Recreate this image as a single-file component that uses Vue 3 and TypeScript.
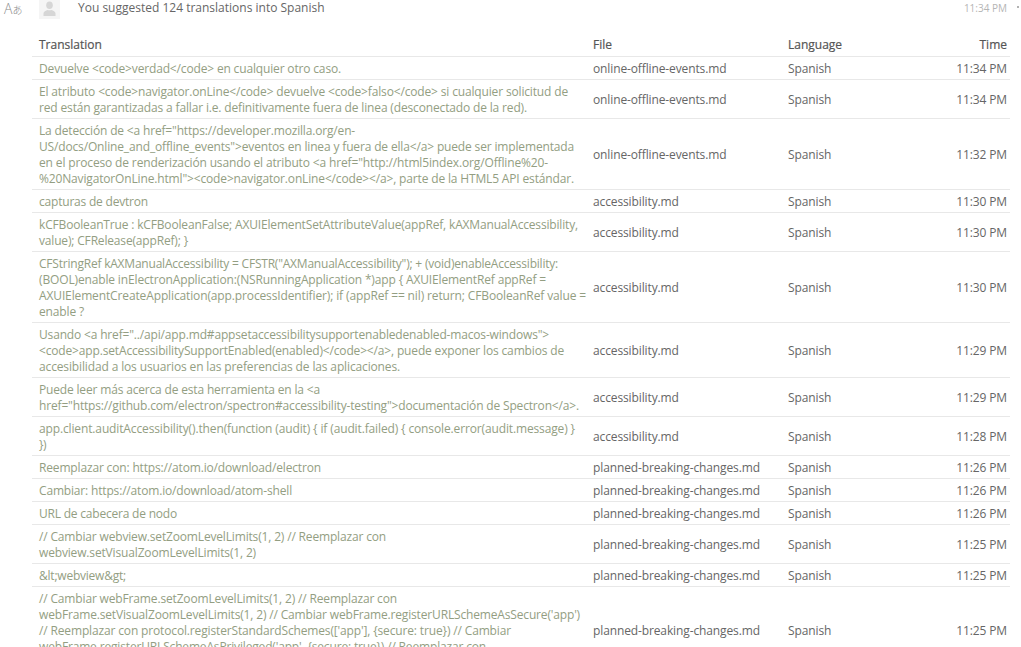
<script setup lang="ts">
import { onMounted, ref } from 'vue'

interface Line { s: string; end: number }
interface Row { t: Line[]; f: string; time: string }

const TEXT_LEFT = 39
const rows: Row[] = [
  { t: [{ s: 'Devuelve <code>verdad</code> en cualquier otro caso.', end: 341 }], f: 'online-offline-events.md', time: '11:34 PM' },
  { t: [{ s: 'El atributo <code>navigator.onLine</code> devuelve <code>falso</code> si cualquier solicitud de', end: 568 }, { s: 'red están garantizadas a fallar i.e. definitivamente fuera de linea (desconectado de la red).', end: 527 }], f: 'online-offline-events.md', time: '11:34 PM' },
  { t: [{ s: 'La detección de <a href="https://developer.mozilla.org/en-', end: 355 }, { s: 'US/docs/Online_and_offline_events">eventos en linea y fuera de ella</a> puede ser implementada', end: 574 }, { s: 'en el proceso de renderización usando el atributo <a href="http://html5index.org/Offline%20-', end: 548 }, { s: '%20NavigatorOnLine.html"><code>navigator.onLine</code></a>, parte de la HTML5 API estándar.', end: 574 }], f: 'online-offline-events.md', time: '11:32 PM' },
  { t: [{ s: 'capturas de devtron', end: 148 }], f: 'accessibility.md', time: '11:30 PM' },
  { t: [{ s: 'kCFBooleanTrue : kCFBooleanFalse; AXUIElementSetAttributeValue(appRef, kAXManualAccessibility,', end: 578 }, { s: 'value); CFRelease(appRef); }', end: 188 }], f: 'accessibility.md', time: '11:30 PM' },
  { t: [{ s: 'CFStringRef kAXManualAccessibility = CFSTR("AXManualAccessibility"); + (void)enableAccessibility:', end: 558 }, { s: '(BOOL)enable inElectronApplication:(NSRunningApplication *)app { AXUIElementRef appRef =', end: 546 }, { s: 'AXUIElementCreateApplication(app.processIdentifier); if (appRef == nil) return; CFBooleanRef value =', end: 586 }, { s: 'enable ?', end: 84 }], f: 'accessibility.md', time: '11:30 PM' },
  { t: [{ s: 'Usando <a href="../api/app.md#appsetaccessibilitysupportenabledenabled-macos-windows">', end: 549 }, { s: '<code>app.setAccessibilitySupportEnabled(enabled)</code></a>, puede exponer los cambios de', end: 564 }, { s: 'accesibilidad a los usuarios en las preferencias de las aplicaciones.', end: 400 }], f: 'accessibility.md', time: '11:29 PM' },
  { t: [{ s: 'Puede leer más acerca de esta herramienta en la <a', end: 320 }, { s: 'href="https://github.com/electron/spectron#accessibility-testing">documentación de Spectron</a>.', end: 579 }], f: 'accessibility.md', time: '11:29 PM' },
  { t: [{ s: 'app.client.auditAccessibility().then(function (audit) { if (audit.failed) { console.error(audit.message) }', end: 575 }, { s: '})', end: 46 }], f: 'accessibility.md', time: '11:28 PM' },
  { t: [{ s: 'Reemplazar con: https://atom.io/download/electron', end: 321 }], f: 'planned-breaking-changes.md', time: '11:26 PM' },
  { t: [{ s: 'Cambiar: https://atom.io/download/atom-shell', end: 292 }], f: 'planned-breaking-changes.md', time: '11:26 PM' },
  { t: [{ s: 'URL de cabecera de nodo', end: 177 }], f: 'planned-breaking-changes.md', time: '11:26 PM' },
  { t: [{ s: '// Cambiar webview.setZoomLevelLimits(1, 2) // Reemplazar con', end: 386 }, { s: 'webview.setVisualZoomLevelLimits(1, 2)', end: 256 }], f: 'planned-breaking-changes.md', time: '11:25 PM' },
  { t: [{ s: '&lt;webview&gt;', end: 126 }], f: 'planned-breaking-changes.md', time: '11:25 PM' },
  { t: [{ s: '// Cambiar webFrame.setZoomLevelLimits(1, 2) // Reemplazar con', end: 397 }, { s: "webFrame.setVisualZoomLevelLimits(1, 2) // Cambiar webFrame.registerURLSchemeAsSecure('app')", end: 580 }, { s: "// Reemplazar con protocol.registerStandardSchemes(['app'], {secure: true}) // Cambiar", end: 511 }, { s: "webFrame.registerURLSchemeAsPrivileged('app', {secure: true}) // Reemplazar con", end: 486 }, { s: "protocol.registerStandardSchemes(['app'], {secure: true})", end: 360 }], f: 'planned-breaking-changes.md', time: '11:25 PM' },
]

// The source was set with slightly different glyph advances, so each line is
// fitted to its measured width through a per-line letter-spacing.
const spacing = ref<Record<string, string>>({})
const tableEl = ref<HTMLElement | null>(null)

onMounted(() => {
  const next: Record<string, string> = {}
  tableEl.value?.querySelectorAll<HTMLElement>('[data-line]').forEach((el) => {
    const [i, j] = (el.dataset.line as string).split('-').map(Number)
    const line = rows[i].t[j]
    const diff = line.end - TEXT_LEFT - el.getBoundingClientRect().width
    next[`${i}-${j}`] = `${(diff / line.s.length).toFixed(3)}px`
  })
  spacing.value = next
})
</script>

<template>
  <div class="page">
    <div class="head">
      <div class="tr-icon"><span class="tr-a">A</span><span class="tr-k">あ</span></div>
      <div class="avatar">
        <svg width="13" height="15" viewBox="0 0 13 15" fill="#d6d6d6">
          <path d="M6.5 0.5 C8.7 0.5 9.8 2 9.8 4.2 C9.8 6.2 8.8 8 6.5 8 C4.2 8 3.2 6.2 3.2 4.2 C3.2 2 4.3 0.5 6.5 0.5 Z" />
          <path d="M0.5 15 V12.2 C0.5 10.6 2.8 9.6 4.6 8.9 C5.8 9.5 7.2 9.5 8.4 8.9 C10.2 9.6 12.5 10.6 12.5 12.2 V15 Z" />
        </svg>
      </div>
      <div class="title">You suggested 124 translations into Spanish</div>
      <div class="stamp">11:34 PM</div>
      <span class="dot"></span>
    </div>
    <table ref="tableEl" class="tbl">
      <colgroup>
        <col class="c1" /><col class="c2" /><col class="c3" /><col class="c4" />
      </colgroup>
      <thead>
        <tr>
          <th>Translation</th>
          <th>File</th>
          <th>Language</th>
          <th class="right">Time</th>
        </tr>
      </thead>
      <tbody>
        <tr v-for="(r, i) in rows" :key="i">
          <td class="tr">
            <div v-for="(l, j) in r.t" :key="j" class="ln">
              <span :data-line="`${i}-${j}`" :style="{ letterSpacing: spacing[`${i}-${j}`] }">{{ l.s }}</span>
            </div>
          </td>
          <td class="fit">{{ r.f }}</td>
          <td class="fit">Spanish</td>
          <td class="right fit">{{ r.time }}</td>
        </tr>
      </tbody>
    </table>
  </div>
</template>

<style>
html, body { margin: 0; padding: 0; background: #fff; overflow: hidden; height: 647px; }
</style>

<style scoped>
.page {
  width: 1021px;
  height: 647px;
  overflow: hidden;
  font-family: "Open Sans", "Liberation Sans", sans-serif;
  font-size: 12px;
  color: #555;
}
.head {
  display: flex;
  align-items: center;
  height: 15px;
  margin-bottom: 17px;
  padding-right: 14px;
  position: relative;
}
.tr-icon {
  margin-left: 4px;
  width: 16px;
  flex: none;
  display: flex;
  align-items: baseline;
  color: #8a8a8a;
  line-height: 14px;
  margin-top: 3px;
}
.tr-a { font-size: 14px; font-weight: 300; width: 9px; }
.tr-k { font-family: "Noto Sans CJK JP", sans-serif; font-size: 10px; font-weight: 300; }
.avatar {
  width: 21px;
  height: 19px;
  margin-left: 19px;
  background: #f5f5f5;
  display: flex;
  justify-content: center;
  align-self: flex-start;
  padding-top: 1px;
  box-sizing: border-box;
  flex: none;
}
.title { margin-left: 18px; font-size: 12px; color: #666; flex: 1; }
.stamp { font-size: 10px; color: #b5b5b5; }
.dot {
  position: absolute;
  right: 2px;
  top: 6px;
  width: 2px;
  height: 2px;
  border-radius: 50%;
  background: #999;
}
.tbl {
  margin-left: 32px;
  width: 978px;
  table-layout: fixed;
  border-collapse: collapse;
}
.c1 { width: 554px; }
.c2 { width: 195px; }
.c3 { width: 140px; }
.c4 { width: 89px; }
th {
  text-align: left;
  font-size: 12px;
  color: #555;
  height: 22px;
  padding: 2px 3px 0 7px;
  border-bottom: 1px solid #e8e8e8;
  vertical-align: middle;
  line-height: 16px;
  font-weight: 400;
  -webkit-text-stroke: 0.2px #555;
}
td {
  padding: 4px 3px 2px 7px;
  border-bottom: 1px solid #e8e8e8;
  line-height: 16px;
  color: #666;
  white-space: nowrap;
  vertical-align: middle;
}
.right { text-align: right; }
.fit { letter-spacing: -0.12px; }
.tr { color: #939e82; }
.ln { white-space: nowrap; }
</style>
